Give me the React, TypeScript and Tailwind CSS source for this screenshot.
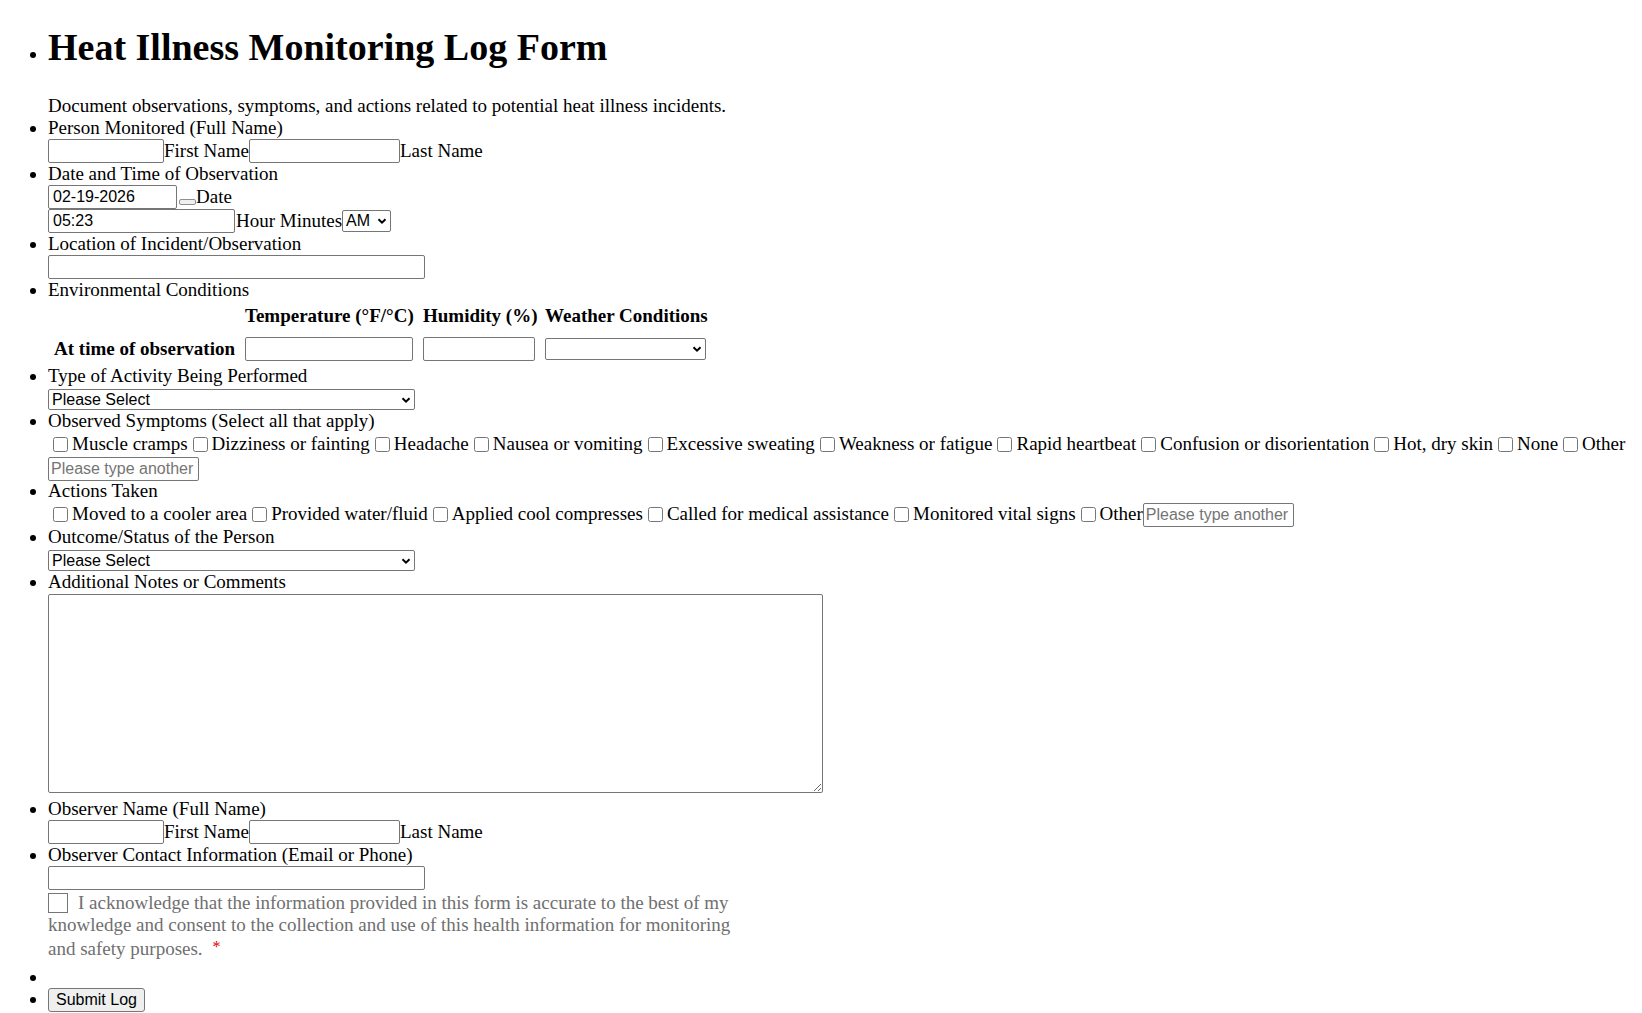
import React from 'react';

const serif = "font-['Liberation_Serif','Times_New_Roman',serif]";
const field =
  "h-[24px] border border-[#767676] rounded-[2px] bg-white px-[2px] text-[16px] text-black font-['Liberation_Sans',Arial,sans-serif] outline-none placeholder:text-[#757575]";
const select =
  "h-[21px] border border-[#767676] rounded-[2px] bg-white pl-[3px] pr-[2px] text-[16px] text-black font-['Liberation_Sans',Arial,sans-serif] flex items-center justify-between";

const symptoms = [
  'Muscle cramps',
  'Dizziness or fainting',
  'Headache',
  'Nausea or vomiting',
  'Excessive sweating',
  'Weakness or fatigue',
  'Rapid heartbeat',
  'Confusion or disorientation',
  'Hot, dry skin',
  'None',
  'Other',
];

const actions = [
  'Moved to a cooler area',
  'Provided water/fluid',
  'Applied cool compresses',
  'Called for medical assistance',
  'Monitored vital signs',
  'Other',
];

function Chevron() {
  return (
    <svg width="12" height="12" viewBox="0 0 12 12" className="shrink-0">
      <path d="M2.5 4.2 L6 7.7 L9.5 4.2" fill="none" stroke="#000" strokeWidth="2" />
    </svg>
  );
}

function FakeSelect({ width, label }: { width: string; label?: string }) {
  return (
    <div className={`${select} ${width}`}>
      <span className="leading-none">{label ?? ''}</span>
      <Chevron />
    </div>
  );
}

function Box() {
  return (
    <span className="inline-block w-[15px] h-[15px] ml-[5px] mr-[4px] border border-[#767676] rounded-[2.5px] bg-white shrink-0" />
  );
}

function Label({ children }: { children: React.ReactNode }) {
  return <div className="h-[22px] leading-[22px]">{children}</div>;
}

function NameRow() {
  return (
    <div className="h-[24px] flex items-center leading-[22px]">
      <input className={`${field} w-[116px]`} />
      <span>First Name</span>
      <input className={`${field} w-[151px]`} />
      <span>Last Name</span>
    </div>
  );
}

export default function App() {
  return (
    <div className={`${serif} text-[19px] leading-[22px] text-black bg-white min-h-[1013px]`}>
      <ul className="list-disc pl-12 m-0 leading-[22px]">
        <li>
          <h1 className="pt-[25px] text-[38px] leading-[44px] font-bold">Heat Illness Monitoring Log Form</h1>
          <div className="mt-[26px] h-[22px] leading-[22px]">
            Document observations, symptoms, and actions related to potential heat illness incidents.
          </div>
        </li>

        <li>
          <Label>Person Monitored (Full Name)</Label>
          <NameRow />
        </li>

        <li>
          <Label>Date and Time of Observation</Label>
          <div className="h-[24px] flex items-center leading-[22px]">
            <input className={`${field} w-[129px] pl-[4px]`} defaultValue="02-19-2026" />
            <span className="self-end mb-[4px] ml-[2px] w-[17px] h-[6px] border border-[#8f8f8f] rounded-[2px] bg-[#efefef]" />
            <span>Date</span>
          </div>
          <div className="h-[24px] flex items-center leading-[22px]">
            <input className={`${field} w-[187px] pl-[4px]`} defaultValue="05:23" />
            <span className="ml-[1px]">Hour Minutes</span>
            <FakeSelect width="w-[49px] h-[22px]" label="AM" />
          </div>
        </li>

        <li>
          <Label>Location of Incident/Observation</Label>
          <div className="h-[24px] flex items-center">
            <input className={`${field} w-[377px]`} />
          </div>
        </li>

        <li>
          <Label>Environmental Conditions</Label>
          <div className="grid grid-cols-[auto_168px_112px_161px] gap-x-[10px] gap-y-[10px] items-center w-fit ml-[6px] pt-[4px] pb-[4px]">
            <div />
            <div className="font-bold text-center h-[22px] leading-[22px] whitespace-nowrap">Temperature (°F/°C)</div>
            <div className="font-bold text-center h-[22px] leading-[22px] whitespace-nowrap">Humidity (%)</div>
            <div className="font-bold text-center h-[22px] leading-[22px] whitespace-nowrap">Weather Conditions</div>
            <div className="font-bold leading-[22px] whitespace-nowrap">At time of observation</div>
            <input className={`${field} w-[168px]`} />
            <input className={`${field} w-[112px]`} />
            <FakeSelect width="w-[161px] h-[22px]" />
          </div>
        </li>

        <li>
          <Label>Type of Activity Being Performed</Label>
          <div className="h-[23px] pt-[2px]">
            <FakeSelect width="w-[367px]" label="Please Select" />
          </div>
        </li>

        <li>
          <Label>Observed Symptoms (Select all that apply)</Label>
          <div className="h-[24px] flex items-center whitespace-nowrap leading-[22px]">
            {symptoms.map((s) => (
              <span key={s} className="flex items-center">
                <Box />
                <span>{s}</span>
              </span>
            ))}
          </div>
          <div className="h-[24px] pt-[1px]">
            <input className={`${field} w-[151px] h-[23px]`} placeholder="Please type another" />
          </div>
        </li>

        <li>
          <Label>Actions Taken</Label>
          <div className="h-[24px] flex items-center whitespace-nowrap leading-[22px]">
            {actions.map((a) => (
              <span key={a} className="flex items-center">
                <Box />
                <span>{a}</span>
              </span>
            ))}
            <input className={`${field} w-[151px] mt-[2px]`} placeholder="Please type another" />
          </div>
        </li>

        <li>
          <Label>Outcome/Status of the Person</Label>
          <div className="h-[23px] pt-[2px]">
            <FakeSelect width="w-[367px]" label="Please Select" />
          </div>
        </li>

        <li>
          <Label>Additional Notes or Comments</Label>
          <div className="h-[205px] pt-[1px]">
            <textarea className="block w-[775px] h-[199px] border border-[#767676] rounded-[2px] bg-white outline-none" />
          </div>
        </li>

        <li>
          <Label>Observer Name (Full Name)</Label>
          <NameRow />
        </li>

        <li>
          <Label>Observer Contact Information (Email or Phone)</Label>
          <div className="h-[24px] flex items-center">
            <input className={`${field} w-[377px]`} />
          </div>
          <div className="w-[690px] pt-[2px] pb-[6px] leading-[22px] text-[#6f6f6f]">
            <span className="inline-block align-[-4px] w-[20px] h-[20px] mr-[10px] border border-[#767676] bg-white" />
            I acknowledge that the information provided in this form is accurate to the best of my knowledge and consent to the collection and use of this health information for monitoring and safety purposes.
            <span className="ml-[10px] text-[#e30000] text-[16px] align-[3px]">*</span>
          </div>
        </li>

        <li className="h-[22px]" />

        <li>
          <div className="h-[24px] flex items-center">
            <button className="h-[24px] px-[7px] border border-[#767676] rounded-[3px] bg-[#efefef] text-[16px] font-['Liberation_Sans',Arial,sans-serif] text-black leading-none">
              Submit Log
            </button>
          </div>
        </li>
      </ul>
    </div>
  );
}
